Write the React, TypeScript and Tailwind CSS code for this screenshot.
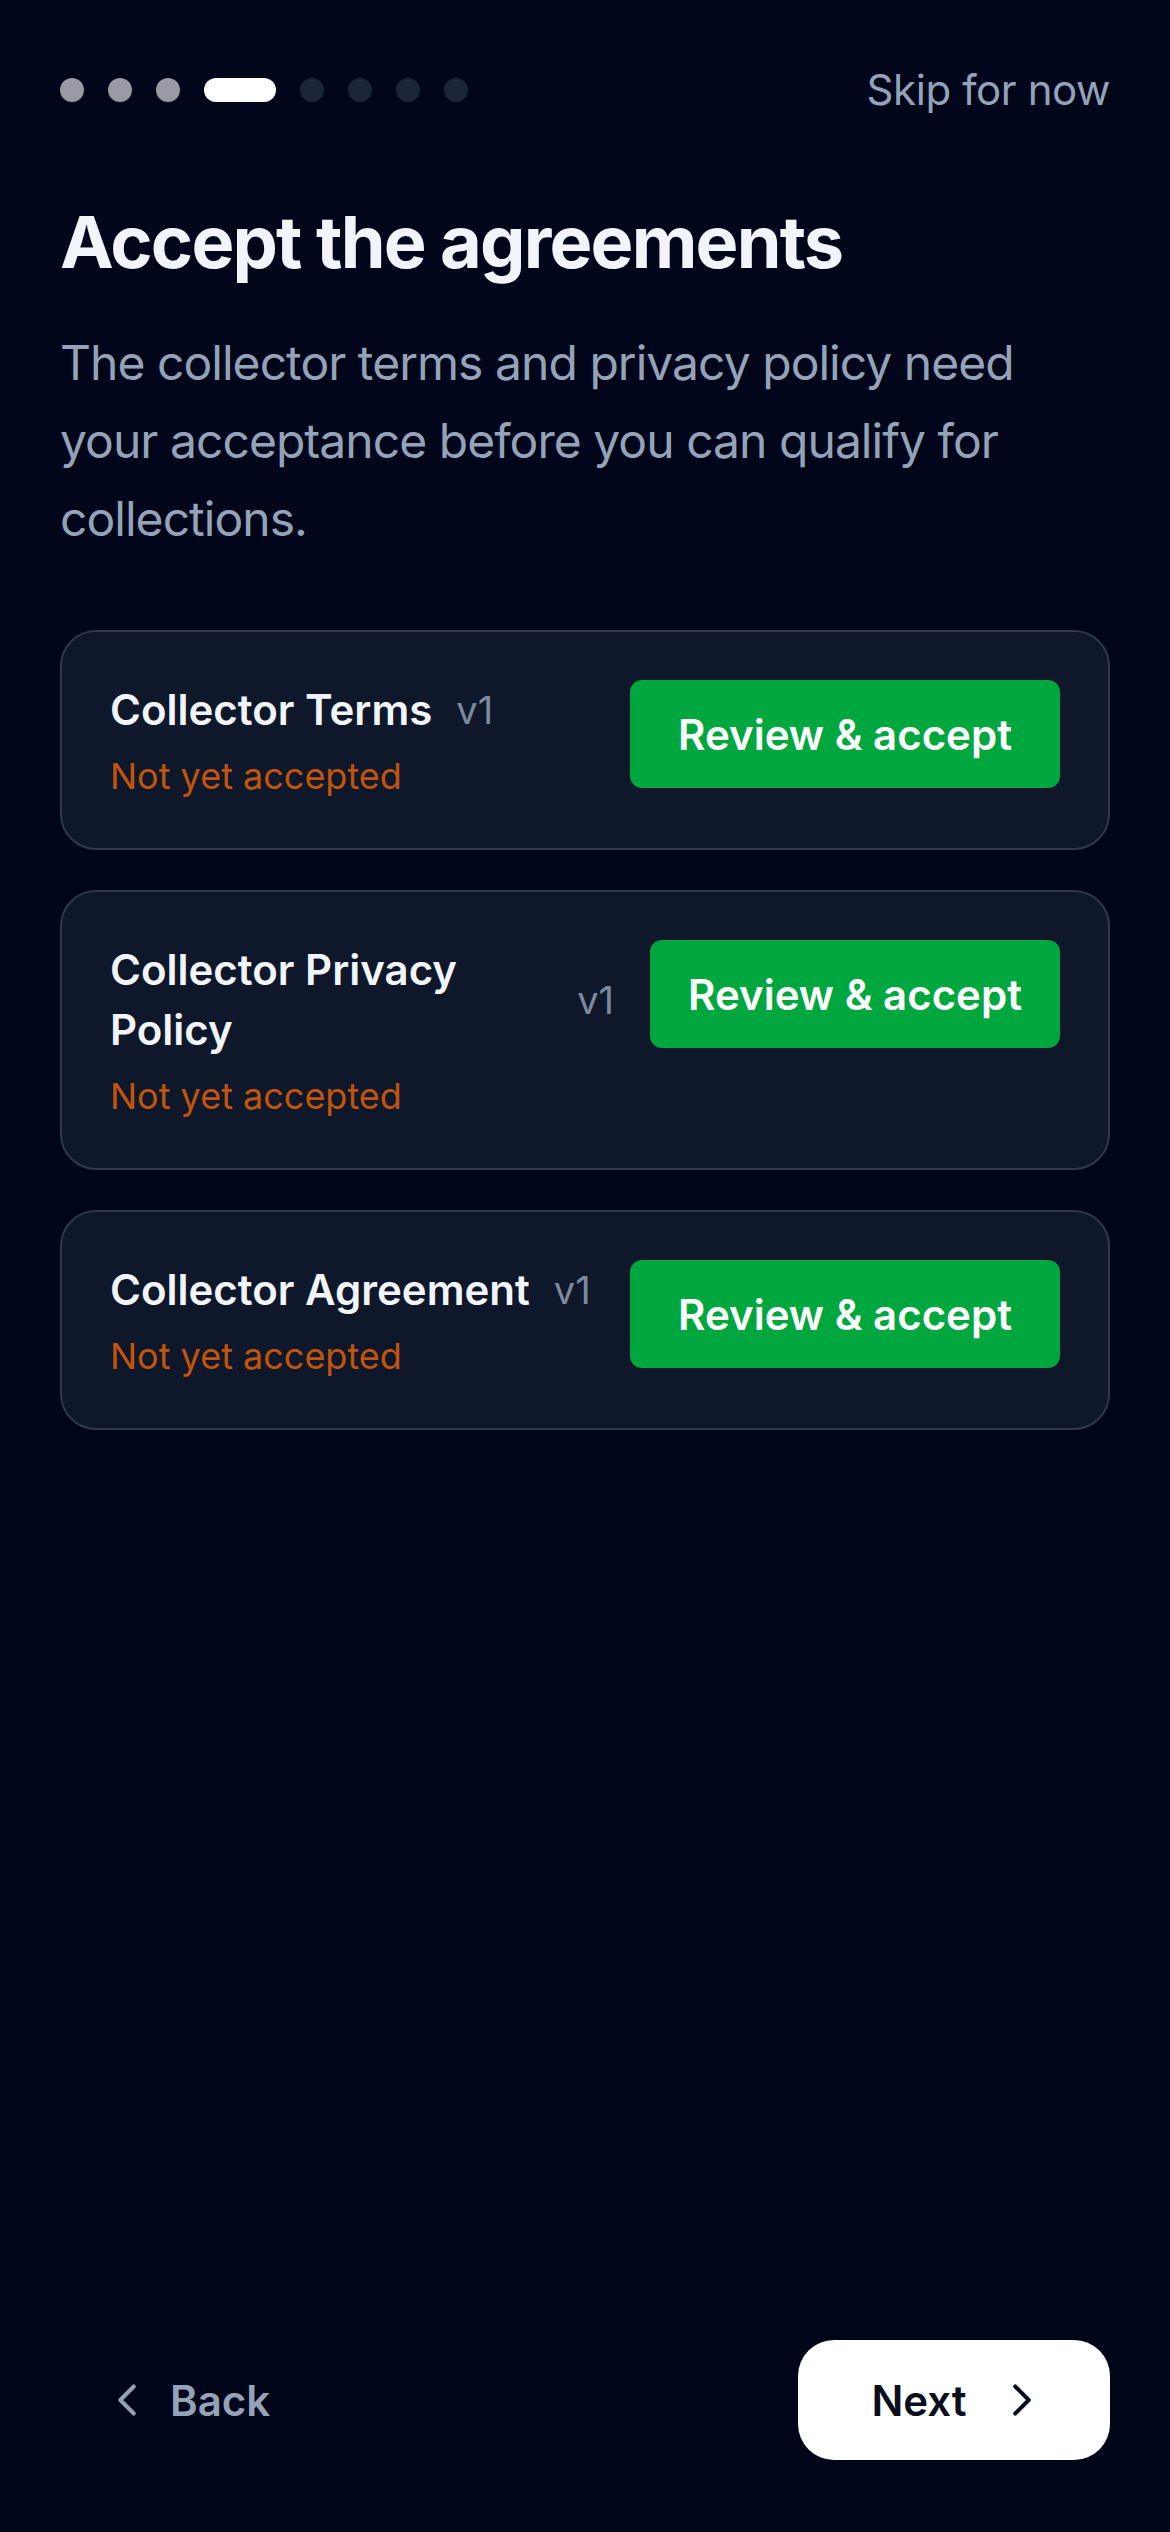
import { ChevronLeft, ChevronRight } from "lucide-react";

const agreements = [
  { title: "Collector Terms", version: "v1", buttonPad: "px-[48px]" },
  { title: "Collector Privacy Policy", version: "v1", buttonPad: "px-[38px]" },
  { title: "Collector Agreement", version: "v1", buttonPad: "px-[48px]" },
];

const steps = ["done", "done", "done", "current", "todo", "todo", "todo", "todo"];

function StepDots() {
  return (
    <div className="flex items-center gap-[24px]">
      {steps.map((step, i) => (
        <div
          key={i}
          className={
            step === "current"
              ? "h-[24px] w-[72px] rounded-full bg-white"
              : step === "done"
              ? "h-[24px] w-[24px] rounded-full bg-[#9a9aa3]"
              : "h-[24px] w-[24px] rounded-full bg-[#1c2538]"
          }
        />
      ))}
    </div>
  );
}

export default function App() {
  return (
    <div
      className="flex min-h-[2532px] w-full flex-col bg-[#02061a] px-[60px] pt-[63px]"
      style={{ fontFamily: "Inter, 'Noto Sans', sans-serif" }}
    >
      {/* Header */}
      <div className="flex h-[54px] items-center justify-between">
        <StepDots />
        <button className="text-[42px] leading-[54px] tracking-[-0.01em] text-[#94a3b8]">Skip for now</button>
      </div>

      <div className="flex-1">
        <h1 className="mt-[82px] text-[72px] font-bold leading-[86px] tracking-[-0.025em] text-[#f1f5f9]">
          Accept the agreements
        </h1>
        <p className="mt-[39px] text-[48px] leading-[78px] tracking-[-0.02em] text-[#94a3b8]">
          The collector terms and privacy policy need your acceptance before you can qualify for
          collections.
        </p>

        {/* Agreement cards */}
        <div className="mt-[72px] flex flex-col gap-[40px]">
          {agreements.map((a) => (
            <div
              key={a.title}
              className="flex items-start gap-[36px] rounded-[36px] border-2 border-[#2e394c] bg-[#0f172a] p-[48px]"
            >
              <div className="min-w-0 flex-1">
                <div className="flex items-center">
                  <span className="text-[42px] font-semibold leading-[60px] text-[#f1f5f9]">
                    {a.title}
                  </span>
                  <span className="ml-[24px] shrink-0 text-[38px] leading-[60px] text-[#7d8ba1]">
                    {a.version}
                  </span>
                </div>
                <div className="mt-[12px] text-[36px] leading-[48px] text-[#c2550c]">
                  Not yet accepted
                </div>
              </div>
              <button
                className={`h-[108px] shrink-0 rounded-[12px] bg-[#00a63e] text-[42px] font-semibold text-white ${a.buttonPad}`}
              >
                Review &amp; accept
              </button>
            </div>
          ))}
        </div>
      </div>

      {/* Footer */}
      <div className="flex items-center justify-between pb-[72px]">
        <button className="ml-[40px] flex items-center gap-[16px] text-[42px] font-semibold text-[#94a3b8]">
          <ChevronLeft size={54} strokeWidth={1.8} />
          Back
        </button>
        <button className="flex h-[120px] w-[312px] items-center justify-center gap-[28px] rounded-[36px] bg-white pl-[12px] text-[42px] font-semibold text-[#0a0f1e]">
          Next
          <ChevronRight size={54} strokeWidth={1.8} />
        </button>
      </div>
    </div>
  );
}
